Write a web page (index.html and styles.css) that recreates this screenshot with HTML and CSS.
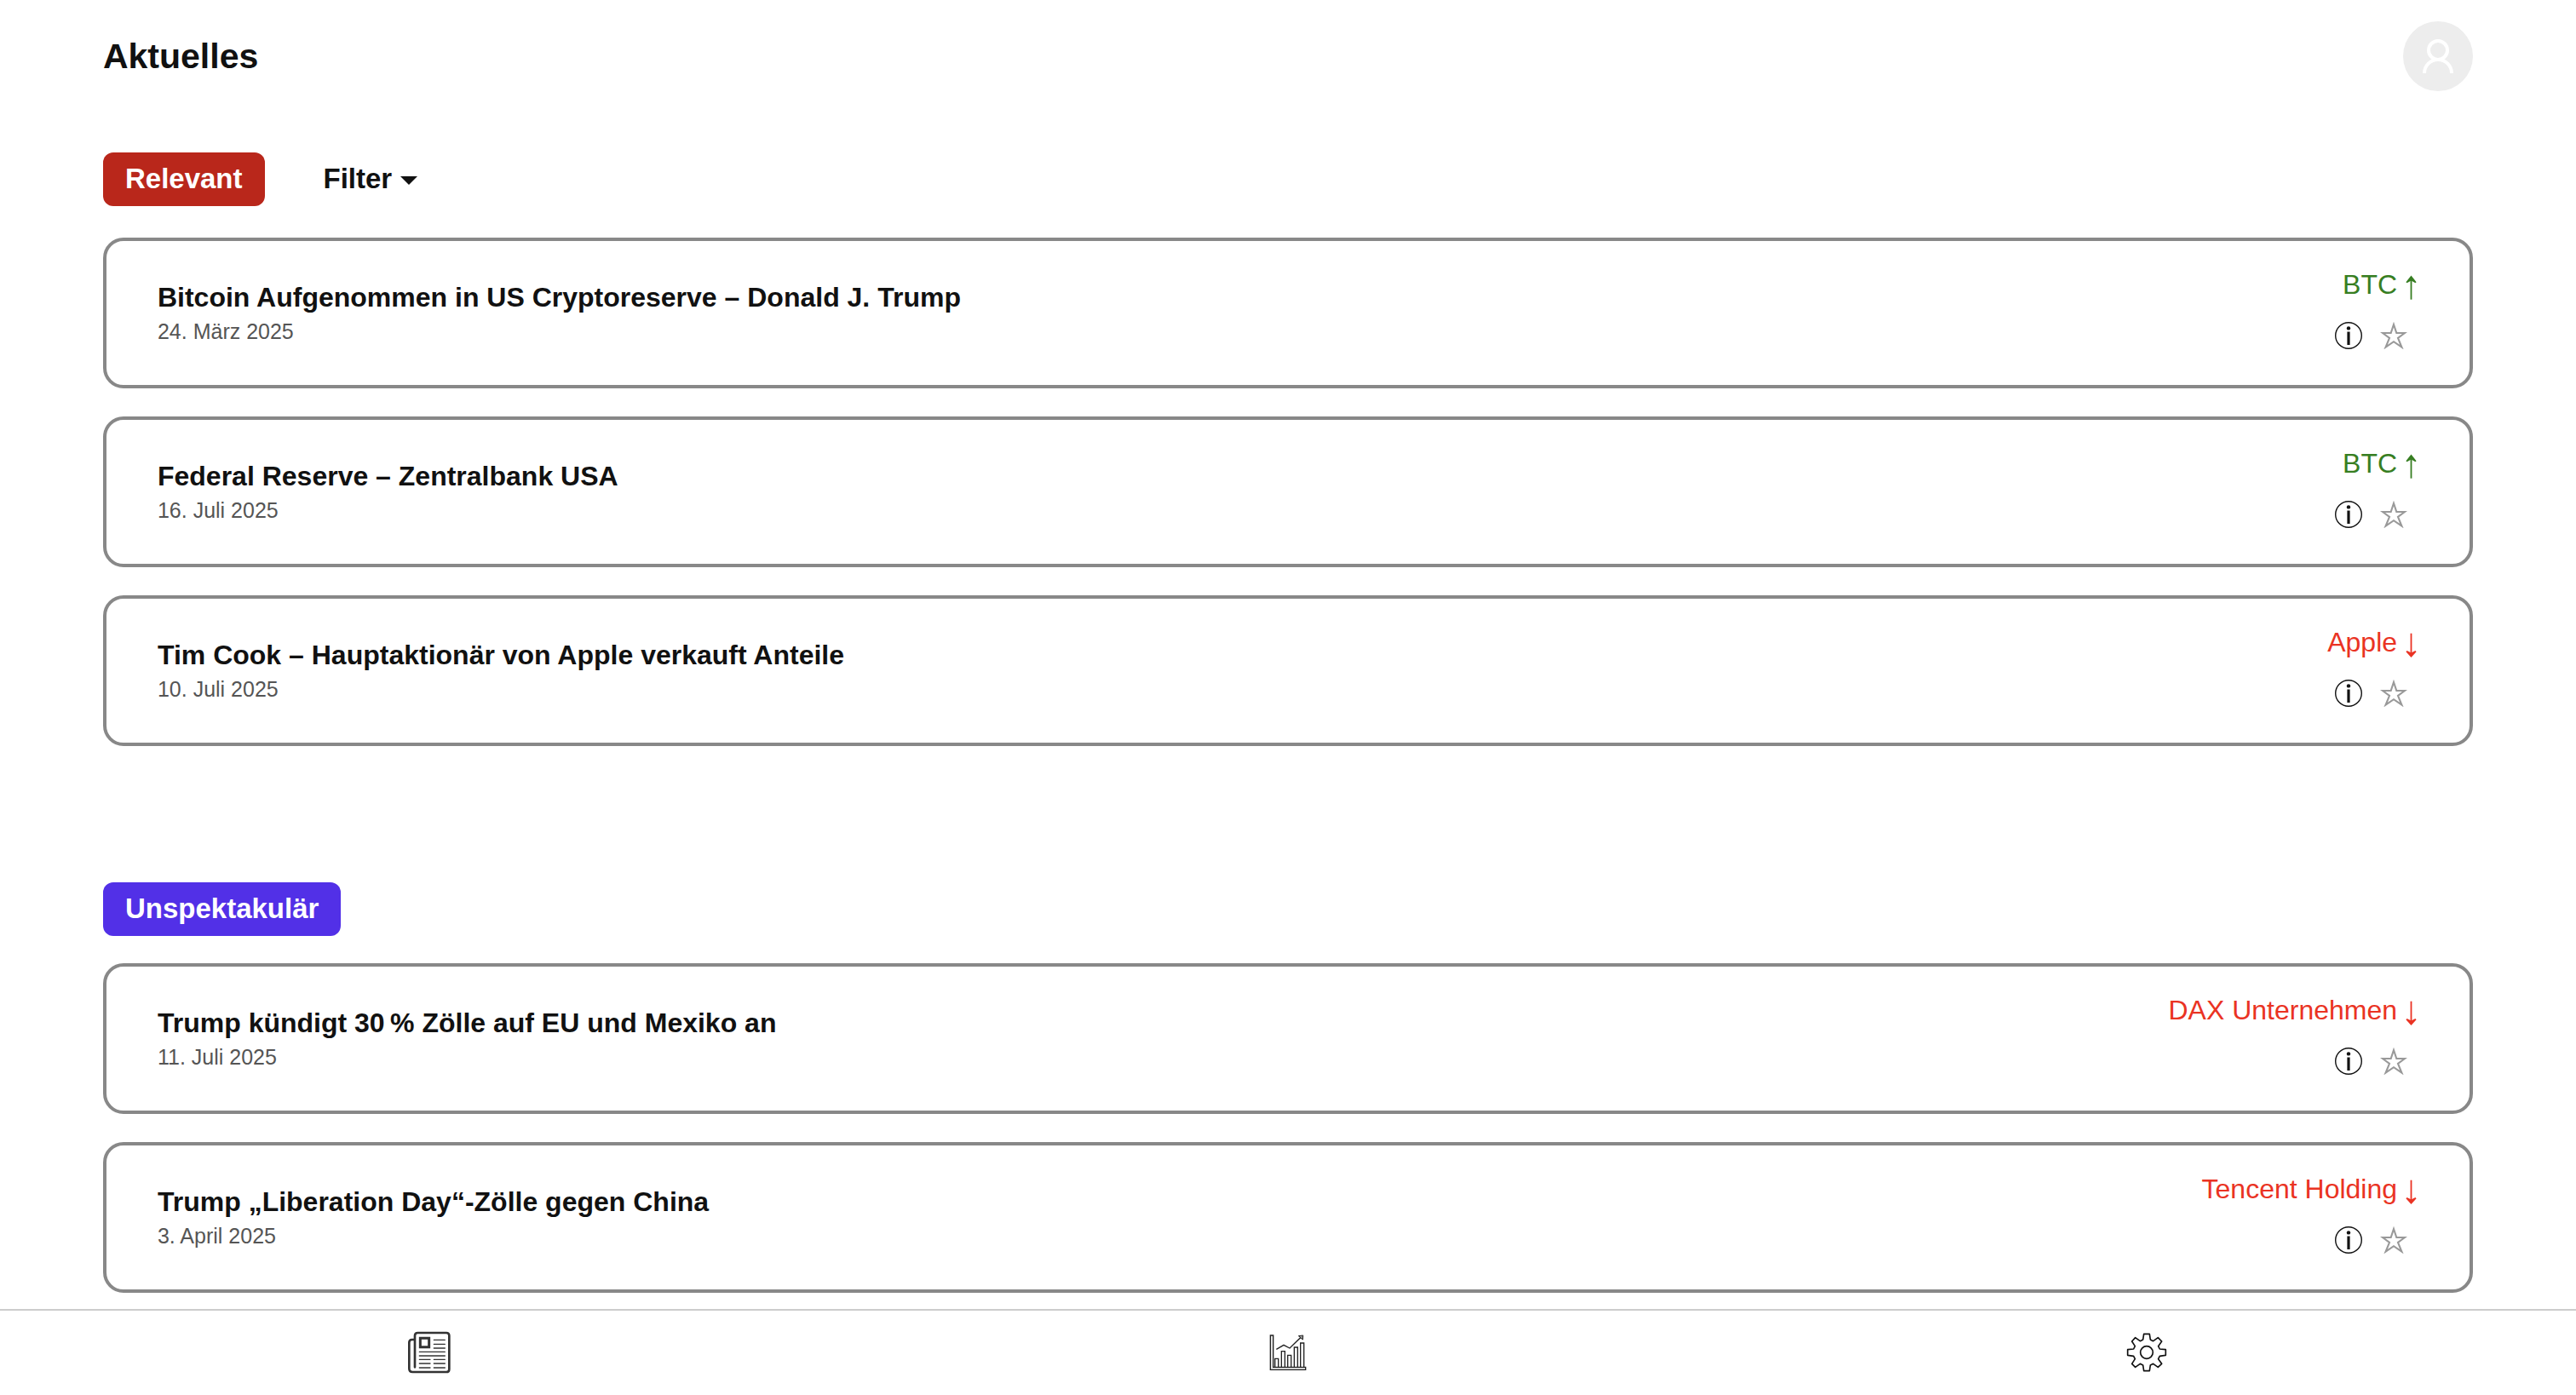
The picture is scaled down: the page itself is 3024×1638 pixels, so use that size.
FILE: index.html
```html
<!DOCTYPE html>
<html lang="de">
<head>
<meta charset="utf-8">
<meta name="viewport" content="width=device-width, initial-scale=1">
<title>Aktuelles</title>
<link rel="stylesheet" href="styles.css">
</head>
<body>
<svg class="sprite" aria-hidden="true">
  <symbol id="up" viewBox="0 0 16 40"><path d="M7.5 37.7V13" fill="none" stroke="currentColor" stroke-width="1.8"/><path d="M7.5 9.5L13.6 17.2L12.4 18.2L7.5 15.5L2.6 18.2L1.4 17.2Z" fill="currentColor"/></symbol>
  <symbol id="down" viewBox="0 0 16 40"><path d="M7.5 9.7V34" fill="none" stroke="currentColor" stroke-width="1.8"/><path d="M7.5 37.9L13.6 31.2L12.4 30L7.5 32.4L2.6 30L1.4 31.2Z" fill="currentColor"/></symbol>
  <symbol id="info" viewBox="0 0 32 32"><circle cx="16" cy="16" r="15.3" fill="none" stroke="currentColor" stroke-width="1.4"/><circle cx="16" cy="7.4" r="2.2" fill="currentColor"/><path d="M16 11.5V27" fill="none" stroke="currentColor" stroke-width="3.2"/></symbol>
  <symbol id="star" viewBox="0 0 32 32"><path d="M16 3L19.3 13H29L21 18.8L25.4 29.6L16 23.2L6.6 29.6L11 18.8L3 13H12.7Z" fill="none" stroke="currentColor" stroke-width="2.1"/></symbol>
</svg>

<main class="content">
  <header class="topbar">
    <h1 class="page-title">Aktuelles</h1>
    <button class="avatar" type="button" aria-label="Profil">
      <svg viewBox="0 0 82 82" fill="none" stroke="currentColor" stroke-width="4"><circle cx="41" cy="34" r="11"/><path d="M25 61a16 16 0 0 1 32 0"/></svg>
    </button>
  </header>

  <section class="group">
    <div class="group-head group-head-filter">
      <h2 class="badge badge-relevant">Relevant</h2>
      <button class="filter" type="button">Filter<span class="caret"></span></button>
    </div>
    <div class="cards">
      <article class="card">
        <div class="story"><h3 class="headline">Bitcoin Aufgenommen in US Cryptoreserve – Donald J. Trump</h3><p class="date">24. März 2025</p></div>
        <div class="side">
          <p class="ticker rise">BTC<svg class="arrow"><use href="#up"/></svg></p>
          <div class="actions"><button class="icon-button" type="button" aria-label="Info"><svg><use href="#info"/></svg></button><button class="icon-button favorite" type="button" aria-label="Merken"><svg><use href="#star"/></svg></button></div>
        </div>
      </article>
      <article class="card">
        <div class="story"><h3 class="headline">Federal Reserve – Zentralbank USA</h3><p class="date">16. Juli 2025</p></div>
        <div class="side">
          <p class="ticker rise">BTC<svg class="arrow"><use href="#up"/></svg></p>
          <div class="actions"><button class="icon-button" type="button" aria-label="Info"><svg><use href="#info"/></svg></button><button class="icon-button favorite" type="button" aria-label="Merken"><svg><use href="#star"/></svg></button></div>
        </div>
      </article>
      <article class="card">
        <div class="story"><h3 class="headline">Tim Cook – Hauptaktionär von Apple verkauft Anteile</h3><p class="date">10. Juli 2025</p></div>
        <div class="side">
          <p class="ticker fall">Apple<svg class="arrow"><use href="#down"/></svg></p>
          <div class="actions"><button class="icon-button" type="button" aria-label="Info"><svg><use href="#info"/></svg></button><button class="icon-button favorite" type="button" aria-label="Merken"><svg><use href="#star"/></svg></button></div>
        </div>
      </article>
    </div>
  </section>

  <section class="group">
    <div class="group-head">
      <h2 class="badge badge-quiet">Unspektakulär</h2>
    </div>
    <div class="cards">
      <article class="card">
        <div class="story"><h3 class="headline">Trump kündigt 30&#8239;% Zölle auf EU und Mexiko an</h3><p class="date">11. Juli 2025</p></div>
        <div class="side">
          <p class="ticker fall">DAX Unternehmen<svg class="arrow"><use href="#down"/></svg></p>
          <div class="actions"><button class="icon-button" type="button" aria-label="Info"><svg><use href="#info"/></svg></button><button class="icon-button favorite" type="button" aria-label="Merken"><svg><use href="#star"/></svg></button></div>
        </div>
      </article>
      <article class="card">
        <div class="story"><h3 class="headline">Trump „Liberation Day“-Zölle gegen China</h3><p class="date">3. April 2025</p></div>
        <div class="side">
          <p class="ticker fall">Tencent Holding<svg class="arrow"><use href="#down"/></svg></p>
          <div class="actions"><button class="icon-button" type="button" aria-label="Info"><svg><use href="#info"/></svg></button><button class="icon-button favorite" type="button" aria-label="Merken"><svg><use href="#star"/></svg></button></div>
        </div>
      </article>
    </div>
  </section>
</main>

<nav class="tabs">
  <a class="tab" href="#news" aria-label="Aktuelles">
    <svg viewBox="57 100 150 150" fill="none" stroke="#333" stroke-linecap="round">
      <path stroke-width="8" d="M81 227V116Q81 106 91 106H192Q202 106 202 116V234Q202 244 192 244H73Q61 244 61 232V140Q61 130 71 130H76"/>
      <path stroke-width="9" d="M100 125H131V156H100Z"/>
      <path stroke-width="4" d="M148 131H187M148 146H187M148 160H187M97 173H187M97 187H187M97 200H135M148 200H187M97 214H135M148 214H187M97 229H135M148 229H187"/>
    </svg>
  </a>
  <a class="tab" href="#charts" aria-label="Charts">
    <svg viewBox="51 100 150 150" fill="none" stroke="#222" stroke-width="4">
      <path fill="#e6e6e6" d="M64 115H74V227H188V236H64Z"/>
      <path d="M80 227V197H92V227M103 227V171H115V227M125 227V185H137V227M148 227V157H160V227M170 227V142H182V227"/>
      <path d="M85 164L111 149L132 160L173 120"/>
      <path fill="#999" stroke-width="3" d="M163 117L179 115L178 130Z"/>
    </svg>
  </a>
  <a class="tab" href="#settings" aria-label="Einstellungen">
    <svg viewBox="60 100 150 150" fill="none" stroke="#111" stroke-width="5" stroke-linejoin="round">
      <path d="M122 130L125 110H145L148 130L158 135L175 123L188 136L176 153L181 163L202 165V185L181 188L176 198L188 215L175 227L158 215L148 220L145 240H125L122 220L112 215L95 227L83 215L94 198L89 188L68 185V165L89 163L94 153L83 136L95 123L112 135Z"/>
      <circle cx="135" cy="175" r="22"/>
    </svg>
  </a>
</nav>
</body>
</html>
```
FILE: styles.css
```css
* {
  box-sizing: border-box;
}

body {
  display: flex;
  flex-direction: column;
  height: 100vh;
  margin: 0;
  background: #fff;
  color: #111;
  font-family: "Liberation Sans", Arial, sans-serif;
  font-size: 32px;
  line-height: 40px;
}

h1, h2, h3, p {
  margin: 0;
}

button {
  padding: 0;
  border: 0;
  background: none;
  color: inherit;
  font: inherit;
  cursor: pointer;
}

svg {
  display: block;
}

.sprite {
  position: absolute;
  width: 0;
  height: 0;
}

.content {
  flex: 1;
  min-height: 0;
  overflow-y: auto;
  padding: 25px 4% 16px;
}

.topbar {
  display: flex;
  align-items: center;
  justify-content: space-between;
  margin-bottom: 72px;
}

.page-title {
  font-size: 41px;
  line-height: 48px;
}

.avatar {
  width: 82px;
  height: 82px;
  border-radius: 50%;
  background: #ededed;
  color: #fff;
}

.group + .group {
  margin-top: 160px;
}

.group-head {
  display: flex;
  align-items: center;
  gap: 69px;
  margin-bottom: 32px;
}

.group-head-filter {
  margin-bottom: 37px;
}

.badge {
  padding: 11px 26px 12px;
  border-radius: 12px;
  color: #fff;
  font-size: 33px;
}

.badge-relevant {
  background: #b9271b;
}

.badge-quiet {
  background: #5230e7;
}

.filter {
  display: flex;
  align-items: center;
  gap: 10px;
  padding-bottom: 2px;
  font-size: 33px;
  font-weight: bold;
}

.caret {
  margin-top: 4px;
  border: 10px solid transparent;
  border-top-color: #111;
  border-bottom: 0;
}

.cards {
  display: grid;
  gap: 33px;
}

.card {
  display: flex;
  align-items: center;
  justify-content: space-between;
  padding: 31px 60px 30px;
  border: 4px solid #888;
  border-radius: 24px;
}

.headline {
  margin-bottom: 2px;
  font-size: 32px;
}

.date {
  color: #555;
  font-size: 25px;
  line-height: 36px;
}

.side {
  display: flex;
  flex-direction: column;
  align-items: flex-end;
  gap: 12px;
}

.ticker {
  display: flex;
  gap: 9px;
}

.rise {
  color: #377e22;
}

.fall {
  color: #ea3323;
}

.arrow {
  width: 16px;
  height: 40px;
}

.actions {
  display: flex;
  gap: 21px;
  padding: 0 13px;
}

.icon-button {
  width: 32px;
  height: 56px;
}

.icon-button svg {
  width: 32px;
  height: 32px;
}

.favorite {
  color: #999;
}

.tabs {
  display: grid;
  grid-template-columns: repeat(3, 1fr);
  border-top: 2px solid #ccc;
}

.tab {
  display: grid;
  place-items: center;
  padding: 24px 0 25px;
}

.tab svg {
  width: 50px;
  height: 50px;
}
```
